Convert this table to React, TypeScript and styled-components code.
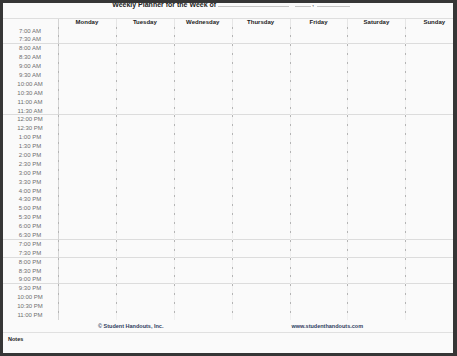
import React from "react";
import styled, { createGlobalStyle } from "styled-components";

const GlobalStyle = createGlobalStyle`
  html, body { margin: 0; padding: 0; background: #363636; }
  body { font-family: "Liberation Sans", Arial, sans-serif; }
  * { box-sizing: border-box; }
`;

const Frame = styled.div`
  width: 457px;
  height: 356px;
  padding: 3px 4px 3px 3px;
  background: #363636;
`;

const Paper = styled.div`
  width: 450px;
  height: 350px;
  background: #fafafa;
  overflow: hidden;
  display: flex;
  flex-direction: column;
`;

const TitleRow = styled.div`
  height: 16px;
  flex: none;
  display: flex;
  align-items: flex-start;
  justify-content: center;
  padding-left: 6px;
  border-bottom: 1px solid #dedede;
`;

const Title = styled.span`
  font-size: 7px;
  line-height: 7px;
  font-weight: bold;
  color: #222;
  margin-top: -2.4px;
  white-space: nowrap;
`;

const Blank = styled.span<{ $w: number; $ml: number }>`
  display: block;
  width: ${(p) => p.$w}px;
  margin-left: ${(p) => p.$ml}px;
  margin-top: 2.5px;
  border-bottom: 1px solid #c4c4c4;
`;

const Comma = styled.span`
  font-size: 6px;
  line-height: 6px;
  font-weight: bold;
  color: #444;
  margin-left: 1px;
  margin-top: -2px;
`;

const Row = styled.div<{ $h: number; $rule?: boolean }>`
  flex: none;
  display: grid;
  grid-template-columns: 55px repeat(7, 57.9px);
  height: ${(p) => p.$h}px;
  box-shadow: ${(p) => (p.$rule ? "inset 0 -1px 0 #dcdcdc" : "none")};
`;

const TimeCell = styled.div`
  font-size: 6px;
  line-height: 8.9px;
  color: #6e6e6e;
  text-align: center;
  padding-right: 1px;
  white-space: nowrap;
`;

const DayCell = styled.div<{ $first?: boolean }>`
  background-image: linear-gradient(#b4b4b4, #b4b4b4),
    linear-gradient(${(p) => (p.$first ? "#d4d4d4" : "#efefef")}, ${(p) => (p.$first ? "#d4d4d4" : "#efefef")});
  background-repeat: no-repeat;
  background-size: 1px 2px, 1px 100%;
  background-position: left top, left top;
`;

const DayHead = styled(DayCell)`
  font-size: 6px;
  line-height: 7.5px;
  font-weight: bold;
  color: #1c1c1c;
  text-align: center;
  background-image: linear-gradient(${(p) => (p.$first ? "#d4d4d4" : "#e6e6e6")}, ${(p) => (p.$first ? "#d4d4d4" : "#e6e6e6")});
  background-size: 1px 100%;
`;

const Footer = styled.div`
  flex: none;
  height: 13px;
  display: flex;
  justify-content: center;
  align-items: center;
  gap: 128px;
  padding-left: 5px;
  border-bottom: 1px solid #e0e0e0;
`;

const Credit = styled.span`
  font-size: 5.5px;
  font-weight: bold;
  color: #2f3d5e;
  white-space: nowrap;
`;

const Notes = styled.div`
  padding: 3px 0 0 5px;
  font-size: 5.5px;
  font-weight: bold;
  color: #1c1c1c;
`;

const days = ["Monday", "Tuesday", "Wednesday", "Thursday", "Friday", "Saturday", "Sunday"];

const times: string[] = [];
for (let m = 7 * 60; m <= 23 * 60; m += 30) {
  const h24 = Math.floor(m / 60);
  const mm = m % 60 === 0 ? "00" : "30";
  const ampm = h24 < 12 ? "AM" : "PM";
  const h = h24 % 12 === 0 ? 12 : h24 % 12;
  times.push(`${h}:${mm} ${ampm}`);
}

const rules = new Set([1, 9, 23, 25, 28]);

export default function App() {
  return (
    <>
      <GlobalStyle />
      <Frame>
        <Paper>
          <TitleRow>
            <Title>Weekly Planner for the Week of</Title>
            <Blank $w={71} $ml={2} />
            <Blank $w={16} $ml={6} />
            <Comma>,</Comma>
            <Blank $w={33} $ml={3} />
          </TitleRow>
          <Row $h={7.55}>
            <div />
            {days.map((d, i) => (
              <DayHead key={d} $first={i === 0}>
                {d}
              </DayHead>
            ))}
          </Row>
          {times.map((t, r) => (
            <Row key={t} $h={8.9} $rule={rules.has(r)}>
              <TimeCell>{t}</TimeCell>
              {days.map((d, i) => (
                <DayCell key={d} $first={i === 0} />
              ))}
            </Row>
          ))}
          <Footer>
            <Credit>© Student Handouts, Inc.</Credit>
            <Credit>www.studenthandouts.com</Credit>
          </Footer>
          <Notes>Notes</Notes>
        </Paper>
      </Frame>
    </>
  );
}
